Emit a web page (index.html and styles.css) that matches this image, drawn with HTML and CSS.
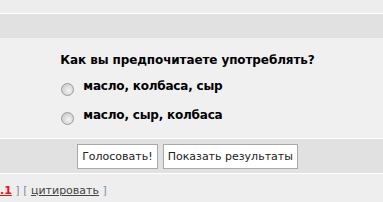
FILE: index.html
```html
<!DOCTYPE html>
<html lang="ru">
<head>
    <meta charset="UTF-8">
    <title>Голосование</title>
    <link rel="stylesheet" href="styles.css">
</head>
<body>
    <div class="top"></div>
    <div class="head"></div>
    <div class="poll">
        <div class="poll-box">
            <div class="question">Как вы предпочитаете употреблять?</div>
            <label class="option"><input type="radio" name="vote" value="1"> масло, колбаса, сыр</label>
            <label class="option"><input type="radio" name="vote" value="2"> масло, сыр, колбаса</label>
        </div>
    </div>
    <div class="actions">
        <button>Голосовать!</button>
        <button>Показать результаты</button>
    </div>
    <div class="footer">
        <a class="num" href="#">.1</a> <span class="br">]</span> <span class="br">[</span> <a class="quote" href="#">цитировать</a> <span class="br">]</span>
    </div>
</body>
</html>
```

FILE: styles.css
```css
body {
    margin: 0;
    font-family: "DejaVu Sans", Verdana, sans-serif;
    background-color: #eeeeee;
}
.top {
    height: 13px;
    background-color: #ededed;
    border-bottom: 1px solid #ffffff;
}
.head {
    height: 24px;
    background-color: #e1e1e1;
}
.poll {
    background-color: #f0f0f0;
    height: 100px;
    padding-right: 8px;
    border-bottom: 1px solid #ffffff;
    display: flex;
    justify-content: center;
}
.poll-box {
    padding-top: 15px;
    white-space: nowrap;
}
.question {
    font-size: 12px;
    font-weight: bold;
    letter-spacing: -0.1px;
    line-height: 15px;
    text-align: center;
    color: #000;
}
.option {
    display: flex;
    align-items: flex-start;
    gap: 9px;
    padding-left: 1px;
    font-size: 12px;
    font-weight: bold;
    letter-spacing: -0.2px;
    line-height: 15px;
    margin-top: 11px;
    color: #000;
}
.option + .option {
    margin-top: 14px;
}
.option input {
    appearance: none;
    -webkit-appearance: none;
    flex: none;
    width: 13px;
    height: 13px;
    margin: 4px 0 -2px 0;
    border: 1px solid #9a9a9a;
    border-radius: 50%;
    background: radial-gradient(circle at 60% 60%, #f4f4f4 0, #dcdcdc 45%, #c4c4c4 100%);
    box-sizing: border-box;
}
.actions {
    height: 35px;
    background-color: #e1e1e1;
    border-bottom: 1px solid #ffffff;
    padding-right: 8px;
    display: flex;
    justify-content: center;
    align-items: flex-start;
    gap: 5px;
    box-sizing: border-box;
    padding-top: 5px;
}
.actions button {
    height: 25px;
    padding: 0 4px;
    font-family: "DejaVu Sans", Verdana, sans-serif;
    font-size: 11px;
    color: #222;
    background-color: #ffffff;
    border: 1px solid #a9a9a9;
    border-radius: 0;
}
.footer {
    padding-top: 10px;
    font-size: 11px;
    line-height: 14px;
    color: #7d8ea8;
    white-space: nowrap;
}
.num {
    color: #ee1111;
    font-weight: bold;
}
.quote {
    color: #444444;
}
```
